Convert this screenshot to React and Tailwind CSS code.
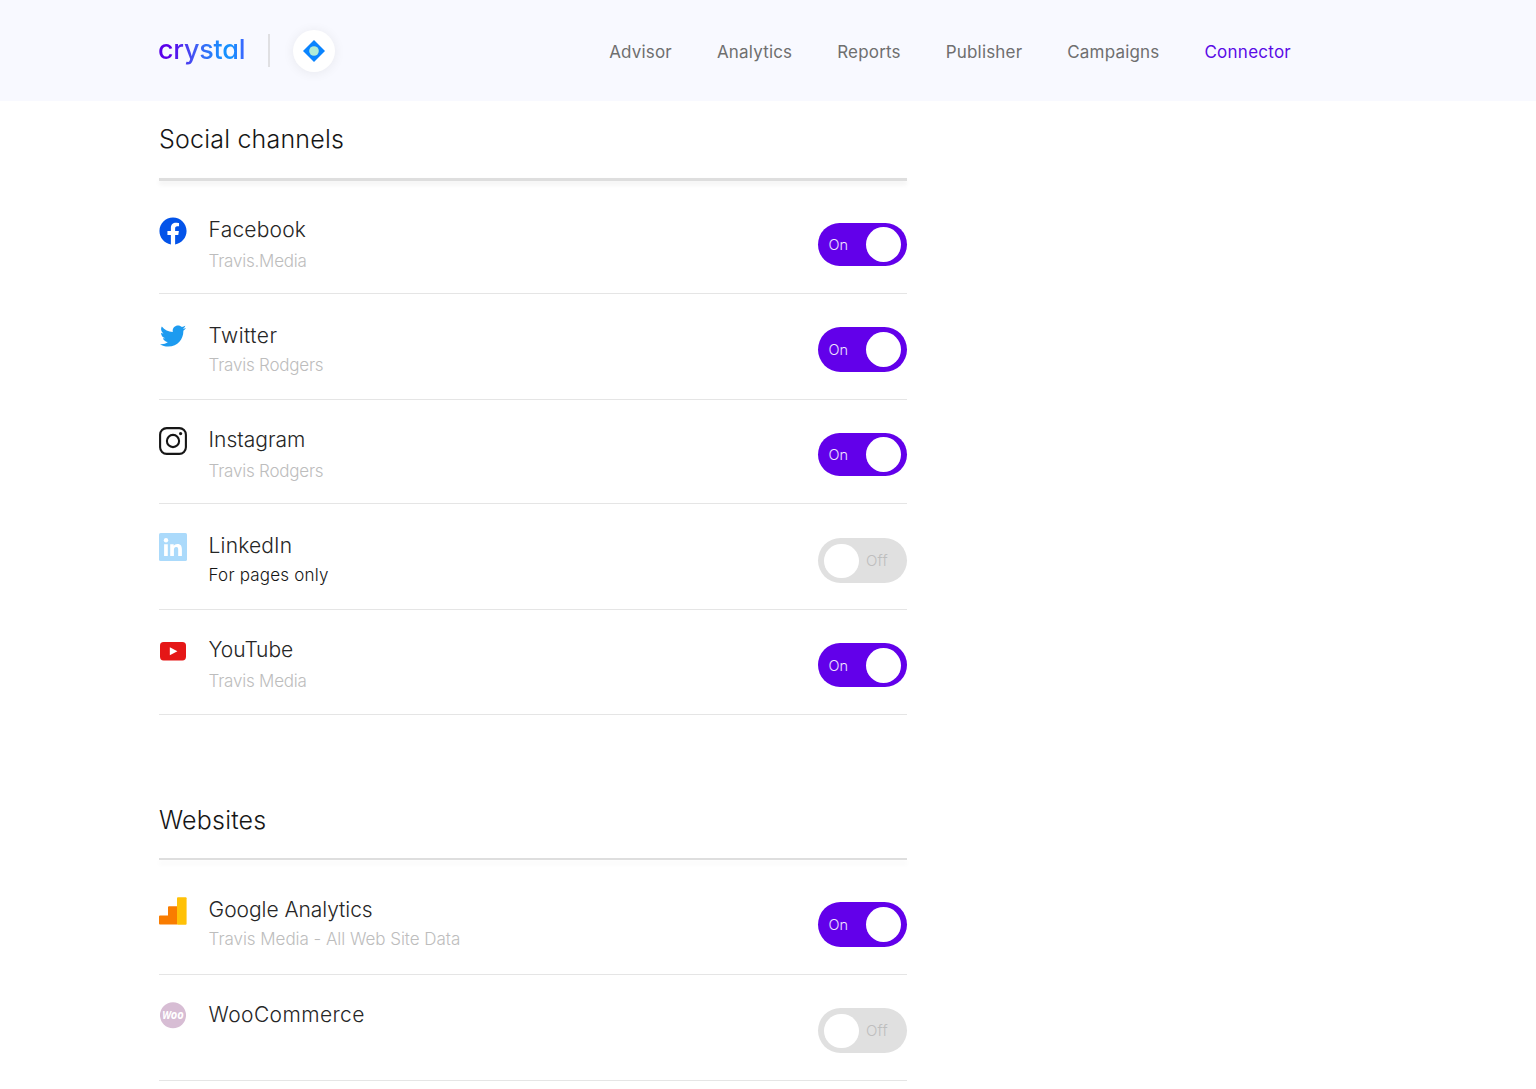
import React from "react";
import { FaFacebook, FaTwitter } from "react-icons/fa";

const FONT = "font-['Inter',sans-serif]";

function FacebookIcon() {
  return <FaFacebook className="h-[28px] w-[28px] text-[#0353e9]" />;
}

function TwitterIcon() {
  return <FaTwitter className="mr-px h-[26px] w-[26px] text-[#1d9bf0]" />;
}

function InstagramIcon() {
  return (
    <svg viewBox="0 0 28 28" className="h-7 w-7" fill="none" stroke="#161616" strokeWidth="2.1">
      <rect x="1.1" y="1.1" width="25.8" height="25.8" rx="6.6" />
      <circle cx="14" cy="14" r="6.1" />
      <circle cx="21.6" cy="6.6" r="1.6" fill="#161616" stroke="none" />
    </svg>
  );
}

function LinkedInIcon() {
  return (
    <svg viewBox="0 0 28 28" className="h-7 w-7">
      <rect width="28" height="28" rx="1.6" fill="#abdafb" />
      <g fill="#fff">
        <circle cx="7" cy="7.3" r="2.2" />
        <path d="M5.1 11.2h3.7V23H5.1zM11.2 11.2h3.5v1.6c.6-1 1.9-1.9 3.7-1.9 3.7 0 4.5 2.4 4.5 5.6V23h-3.7v-5.8c0-1.4 0-3.1-1.9-3.1-2 0-2.4 1.5-2.4 3V23h-3.7z" />
      </g>
    </svg>
  );
}

function YouTubeIcon() {
  return (
    <svg viewBox="0 0 28 28" className="h-7 w-7">
      <rect x="1" y="5" width="26" height="18.4" rx="3.6" fill="#e51717" />
      <path d="M10.8 10.2v8l7.6-4z" fill="#fff" />
    </svg>
  );
}

function AnalyticsIcon() {
  return (
    <svg viewBox="0 0 28 28" className="h-7 w-7">
      <path d="M1 18.5h8V10.2q0-1 1-1h8.3V27.6H1q-1 0-1-1V19.5q0-1 1-1z" fill="#f97c00" />
      <rect x="18" y="0.3" width="9.6" height="27.4" rx="1" fill="#ffc107" />
    </svg>
  );
}

function WooIcon() {
  return (
    <svg viewBox="0 0 28 28" className="h-7 w-7">
      <circle cx="14" cy="14.2" r="13" fill="#d7bdd4" />
      <text x="3.2" y="18" textLength="21.6" lengthAdjust="spacingAndGlyphs" fill="#fff" fontSize="10.5" fontWeight="700" fontStyle="italic" fontFamily="Open Sans, sans-serif">
        W<tspan fontSize="12">oo</tspan>
      </text>
    </svg>
  );
}

function Toggle({ on, className }) {
  return on ? (
    <div className={`flex w-[89px] items-center justify-between rounded-full bg-[#6200ea] pl-[10.5px] pr-[6px] ${className}`}>
      <span className="pt-px text-[14.5px] font-light leading-5 text-white/90">On</span>
      <span className="h-[35px] w-[35px] rounded-full bg-white" />
    </div>
  ) : (
    <div className={`flex w-[89px] items-center rounded-full bg-[#e0e0e0] pl-[5.5px] ${className}`}>
      <span className="h-[34px] w-[35px] rounded-full bg-white" />
      <span className="ml-[7.5px] text-[15px] font-light leading-5 tracking-[0.2px] text-[#bebebe]">Off</span>
    </div>
  );
}

function Row({ icon, name, note, on, row, track = "", body, iconPos, subPos = "", toggle }) {
  return (
    <div className={`flex border-b border-[#e5e5e5] ${row}`}>
      <div className={`flex h-7 w-7 shrink-0 items-center justify-center ${iconPos}`}>{icon}</div>
      <div className={`ml-[21.6px] flex-1 ${body}`}>
        <div className={`text-[21px] font-light leading-[30px] text-[#262626] ${track}`}>{name}</div>
        {note && <div className={`text-[17px] leading-6 ${subPos}`}>{note}</div>}
      </div>
      <Toggle on={on} className={toggle} />
    </div>
  );
}

const MUTED = "font-light tracking-[-0.22px] text-[#bdbdbd]";

const social = [
  { name: "Facebook", note: "Travis.Media", on: true, icon: <FacebookIcon />, row: "h-[113px]", body: "pt-[34px]", iconPos: "mt-[36px]", subPos: `mt-[4px] ${MUTED}`, toggle: "mt-[42px] h-[43px]", track: "tracking-[0.2px]" },
  { name: "Twitter", note: "Travis Rodgers", on: true, icon: <TwitterIcon />, row: "h-[106px]", body: "pt-[27px]", iconPos: "mt-[28px]", subPos: `mt-[2px] ${MUTED}`, toggle: "mt-[33px] h-[45px]", track: "tracking-[0.45px]" },
  { name: "Instagram", note: "Travis Rodgers", on: true, icon: <InstagramIcon />, row: "h-[104px]", body: "pt-[25px]", iconPos: "mt-[27px]", subPos: `mt-[4px] ${MUTED}`, toggle: "mt-[33px] h-[43px]" },
  { name: "LinkedIn", note: "For pages only", on: false, icon: <LinkedInIcon />, row: "h-[106px]", body: "pt-[27px]", iconPos: "mt-[29px]", subPos: "mt-[2px] font-[350] tracking-[0.2px] text-[#161616]", toggle: "mt-[34px] h-[45px]", track: "tracking-[0.15px]" },
  { name: "YouTube", note: "Travis Media", on: true, icon: <YouTubeIcon />, row: "h-[105px]", body: "pt-[25px]", iconPos: "mt-[27px]", subPos: `mt-[4px] ${MUTED}`, toggle: "mt-[33px] h-[44px]", track: "tracking-[-0.1px]" },
];

const websites = [
  { name: "Google Analytics", note: "Travis Media - All Web Site Data", on: true, icon: <AnalyticsIcon />, row: "h-[115px]", body: "pt-[35px]", iconPos: "mt-[37px]", subPos: "mt-[2px] font-light tracking-[-0.04px] text-[#bdbdbd]", toggle: "mt-[42px] h-[45px]", track: "tracking-[-0.05px]" },
  { name: "WooCommerce", on: false, icon: <WooIcon />, row: "h-[106px]", body: "pt-[25px]", iconPos: "mt-[26px]", toggle: "mt-[33px] h-[45px]", track: "tracking-[0.4px]" },
];

const nav = ["Advisor", "Analytics", "Reports", "Publisher", "Campaigns", "Connector"];

function Section({ title, rows, rule, className }) {
  return (
    <section className={className}>
      <h2 className="text-[25px] font-[350] leading-[34px] tracking-[0.2px] text-[#161616]">{title}</h2>
      <div className={`bg-[#dedede] ${rule}`} />
      {rows.map((r) => (
        <Row key={r.name} {...r} />
      ))}
    </section>
  );
}

export default function App() {
  return (
    <div className={`h-[1089px] overflow-hidden bg-white ${FONT}`}>
      <header className="flex h-[101px] items-center bg-[#f8f9ff] pl-[158px] pr-[245px]">
        <span className="-mt-px bg-[linear-gradient(90deg,#5a00ea_0%,#5a00ea_14%,#3f62f5_45%,#1590ff_75%,#1590ff_85%,#3f62ff_100%)] bg-clip-text text-[27px] font-medium leading-[36px] tracking-[-0.25px] text-transparent [font-feature-settings:'cv11']">
          crystal
        </span>
        <span className="ml-[23px] h-[33px] w-[2px] bg-[#e0e0e3]" />
        <span className="ml-[23px] flex h-[42px] w-[42px] items-center justify-center rounded-full bg-white shadow-[0_1px_12px_rgba(0,0,0,0.07)]">
          <svg viewBox="0 0 22 22" className="h-[22px] w-[22px]">
            <path d="M11 0l11 11-11 11L0 11z" fill="#0a84ff" />
            <circle cx="11" cy="11" r="4.8" fill="#b0ecd6" />
          </svg>
        </span>
        <nav className="ml-auto flex gap-[45px] pt-[2px]">
          {nav.map((n) => (
            <a
              key={n}
              className={
                n === "Connector"
                  ? "text-[17px] leading-6 tracking-[0.25px] text-[#5b0be6]"
                  : "text-[17px] leading-6 tracking-[0.18px] text-[#6f6f6f]"
              }
            >
              {n}
            </a>
          ))}
        </nav>
      </header>
      <main className="ml-[159px] w-[748px]">
        <Section title="Social channels" rows={social} className="pt-[21px]" rule="mt-[22px] h-[3px] shadow-[0_3px_5px_rgba(0,0,0,0.08)]" />
        <Section title="Websites" rows={websites} className="pt-[88px]" rule="mt-[21px] h-[2px] shadow-[0_4px_5px_rgba(0,0,0,0.05)]" />
      </main>
    </div>
  );
}
